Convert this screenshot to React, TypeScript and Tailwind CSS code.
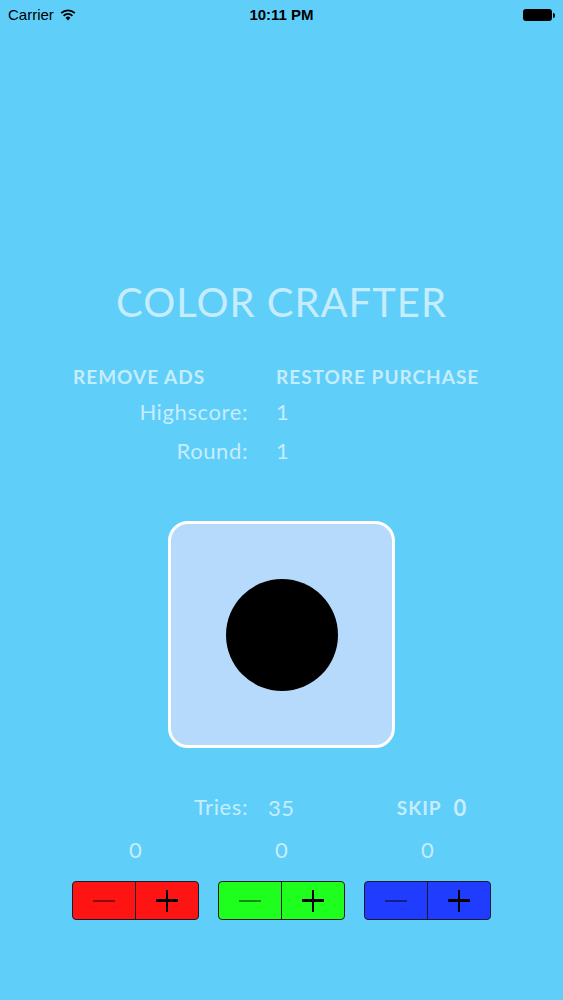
import React from 'react';

const font = { fontFamily: 'Lato, "Open Sans", "Liberation Sans", sans-serif' };

function Stepper({ color }: { color: string }) {
  return (
    <div className={`flex h-[39px] w-[127px] rounded-[4px] border border-[#1a1a2a] overflow-hidden ${color}`}>
      <div className="flex flex-1 items-center justify-center border-r border-[#1a1a2a]">
        <div className="h-[2px] w-[22px] bg-black/45" />
      </div>
      <div className="relative flex flex-1 items-center justify-center">
        <div className="h-[2.5px] w-[22px] bg-black" />
        <div className="absolute h-[22px] w-[2.5px] bg-black" />
      </div>
    </div>
  );
}

export default function App() {
  return (
    <div className="h-[1000px] w-[563px] bg-[#5fcffa] text-[#c6edfd]" style={font}>
      {/* status bar */}
      <div
        className="relative flex h-[30px] items-center justify-between px-[8px] text-[15px] text-black"
        style={{ fontFamily: '"Liberation Sans", Arial, sans-serif' }}
      >
        <div className="flex items-center gap-[6px]">
          <span>Carrier</span>
          <svg width="16" height="12" viewBox="0 0 16 12">
            <path d="M8 11.5 L5.6 8.8 A3.4 3.4 0 0 1 10.4 8.8 Z" fill="black" />
            <path d="M3.6 6.8 A6.2 6.2 0 0 1 12.4 6.8" stroke="black" strokeWidth="1.8" fill="none" />
            <path d="M1.2 4.2 A9.6 9.6 0 0 1 14.8 4.2" stroke="black" strokeWidth="1.8" fill="none" />
          </svg>
        </div>
        <span className="absolute left-1/2 -translate-x-1/2 font-semibold">10:11 PM</span>
        <div className="flex items-center">
          <div className="h-[12px] w-[29px] rounded-[3px] bg-black" />
          <div className="ml-[1px] h-[5px] w-[2px] rounded-r-sm bg-black" />
        </div>
      </div>

      <div className="mt-[249px] text-center text-[40px] leading-[46px] tracking-[1px]">COLOR CRAFTER</div>

      <div className="mt-[40px] flex text-[19px] font-bold leading-[24px] tracking-[1px]">
        <div className="ml-[73px] w-[175px] whitespace-nowrap">REMOVE ADS</div>
        <div className="ml-[28px] whitespace-nowrap">RESTORE PURCHASE</div>
      </div>
      <div className="mt-[9px] flex text-[22px] leading-[28px] tracking-[0.6px]">
        <div className="ml-[73px] w-[175px] text-right">Highscore:</div>
        <div className="ml-[28px]">1</div>
      </div>
      <div className="mt-[11px] flex text-[22px] leading-[28px] tracking-[0.6px]">
        <div className="ml-[73px] w-[175px] text-right">Round:</div>
        <div className="ml-[28px]">1</div>
      </div>

      <div className="ml-[168px] mt-[56px] flex h-[227px] w-[227px] items-center justify-center rounded-[20px] border-[3px] border-white bg-[#b6dafb]">
        <div className="h-[112px] w-[112px] rounded-full bg-black" />
      </div>

      <div className="mt-[43px] flex items-center text-[22px] leading-[28px] tracking-[0.6px]">
        <div className="ml-[73px] w-[175px] text-right">Tries:</div>
        <div className="ml-[20px] mt-[3px]">35</div>
        <div className="ml-[102px] mt-[3px] text-[19px] font-bold tracking-[1px]">SKIP</div>
        <div className="ml-[12px] mt-[3px] font-bold">0</div>
      </div>

      <div className="ml-[72px] mt-[14px] flex gap-[19px] text-[22px] leading-[28px]">
        <div className="w-[127px] text-center">0</div>
        <div className="w-[127px] text-center">0</div>
        <div className="w-[127px] text-center">0</div>
      </div>

      <div className="ml-[72px] mt-[17px] flex gap-[19px]">
        <Stepper color="bg-[#ff1414]" />
        <Stepper color="bg-[#1eff1e]" />
        <Stepper color="bg-[#1f3cff]" />
      </div>
    </div>
  );
}
